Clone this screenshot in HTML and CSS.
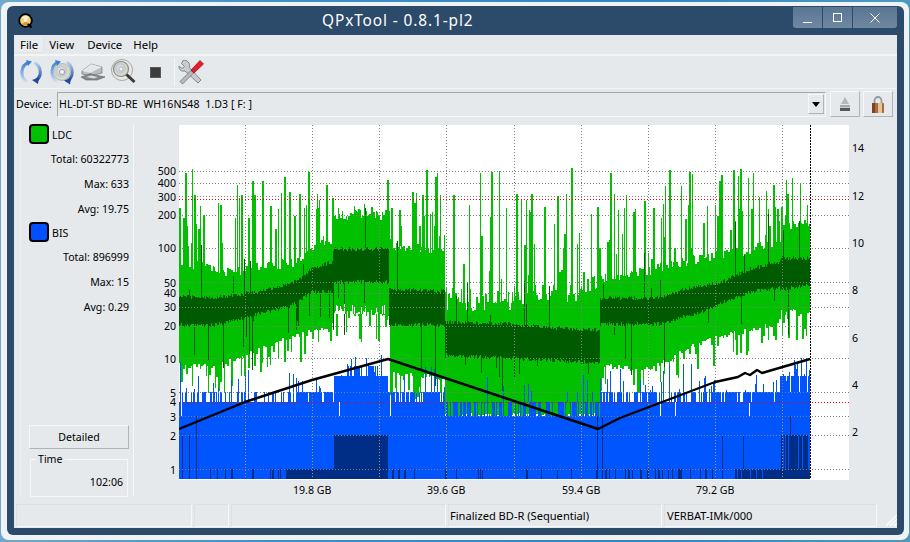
FILE: index.html
```html
<!DOCTYPE html>
<html lang="en">
<head>
<meta charset="utf-8">
<title>QPxTool - 0.8.1-pl2</title>
<link rel="stylesheet" href="styles.css">
</head>
<body>
<div class="window">
  <div class="frame">
    <header class="titlebar">
      <svg class="app-logo" width="16" height="16" viewBox="0 0 16 16">
        <circle cx="7.5" cy="7.5" r="6.3" fill="#f6d27a" stroke="#000" stroke-width="1.8"/>
        <path d="M4 4.5a5 5 0 0 1 7 0L8 7z" fill="#fff4c8"/>
        <path d="M4 11a5 5 0 0 0 7 0L8.5 8z" fill="#e8902a"/>
        <circle cx="7.5" cy="7.5" r="1.5" fill="#fff"/>
        <path d="M10 11l3.5 3.5" stroke="#000" stroke-width="2.4"/>
      </svg>
      <div class="title">QPxTool - 0.8.1-pl2</div>
      <div class="winbtns">
        <div class="winbtn wb-min"><svg width="10" height="10" viewBox="0 0 10 10"><path d="M0 9.5h9" stroke="#fff" stroke-width="1"/></svg></div>
        <div class="winbtn wb-max"><svg width="10" height="10" viewBox="0 0 10 10"><rect x=".5" y=".5" width="8" height="8" fill="none" stroke="#fff"/></svg></div>
        <div class="winbtn wb-close"><svg width="10" height="10" viewBox="0 0 10 10"><path d="M.5.5l9 9M9.5.5l-9 9" stroke="#fff" stroke-width="1"/></svg></div>
      </div>
    </header>
    <div class="client">
      <nav class="menubar">
        <span class="menu menu-active">File</span>
        <span class="menu">View</span>
        <span class="menu">Device</span>
        <span class="menu">Help</span>
      </nav>
      <div class="toolbar">
        <svg class="tool" width="26" height="26" viewBox="0 0 26 26">
          <defs>
            <linearGradient id="arcL" x1="0" y1="0" x2="0" y2="1"><stop offset="0" stop-color="#3f7fd0"/><stop offset="1" stop-color="#cfe0f2"/></linearGradient>
            <linearGradient id="arcR" x1="0" y1="0" x2="0" y2="1"><stop offset="0" stop-color="#b9d2ec"/><stop offset="1" stop-color="#1c4a9c"/></linearGradient>
            <radialGradient id="disc" cx=".45" cy=".45" r=".6"><stop offset="0" stop-color="#f2f2f2"/><stop offset=".5" stop-color="#c4c8d0"/><stop offset=".75" stop-color="#d6e4c8"/><stop offset="1" stop-color="#b4b4c4"/></radialGradient>
          </defs>
          <path d="M11 3.500C3 6 1 17 9 23" fill="none" stroke="url(#arcL)" stroke-width="3.200"/>
          <path d="M8 1l6 1.500-4 4.500z" fill="#3f7fd0"/>
          <path d="M16.500 3.500C24 8 24 17 18 21.500" fill="none" stroke="url(#arcR)" stroke-width="3.200"/>
          <path d="M14 21l7-2.500-1 6.500z" fill="#1c4a9c"/>
        </svg>
        <svg class="tool" width="26" height="26" viewBox="0 0 26 26">
          <circle cx="13" cy="13" r="8.500" fill="url(#disc)" stroke="#9a9aa4" stroke-width=".6"/>
          <circle cx="13" cy="13" r="2.600" fill="#eef0f2" stroke="#8a8a92" stroke-width=".8"/>
          <path d="M9 3C2 6 0 17 8 23" fill="none" stroke="url(#arcL)" stroke-width="2.800"/>
          <path d="M6 1l6 1.500-4 4.500z" fill="#3f7fd0"/>
          <path d="M18 3C25 8 25 17 19 22" fill="none" stroke="url(#arcR)" stroke-width="2.800"/>
          <path d="M15 21.500l7-2.500-1 6.500z" fill="#1c4a9c"/>
        </svg>
        <svg class="tool tool-drive" width="26" height="26" viewBox="0 0 26 26">
          <path d="M2 12l9-7 11 3v6l-12 3-8-2z" fill="#b8bcc0" stroke="#6f7378" stroke-width=".7"/>
          <path d="M2 12l8 2 12-6-11-3z" fill="#e4e6e8"/>
          <path d="M10 14v3" stroke="#6f7378"/>
          <path d="M1 18l9-3 15 3-8 3H6z" fill="#84888c" stroke="#5c6064" stroke-width=".6"/>
          <path d="M6 18l5-1.500 7 1.500-4 1.500z" fill="#d8dadc"/>
        </svg>
        <svg class="tool tool-lens" width="28" height="28" viewBox="0 0 28 28">
          <circle cx="12" cy="12" r="10.500" fill="#e8e8e6" stroke="#a8a8a4" stroke-width="1"/>
          <circle cx="11" cy="11" r="7.500" fill="url(#disc)" stroke="#8c8c8c" stroke-width="1.200"/>
          <circle cx="11" cy="11" r="2" fill="#f4f4f4" stroke="#999" stroke-width=".6"/>
          <path d="M16.500 16.500l8 7.500" stroke="#3a3a3a" stroke-width="3"/>
        </svg>
        <div class="stop"></div>
        <div class="tool-sep"></div>
        <svg class="tool-x" width="26" height="26" viewBox="0 0 26 26">
          <path d="M5 1.500l-1.500 3 3 3-2.500 2-3-2.500C.500 10 3 13 7 12l13 12 3-3L11.500 8.500C12.500 4 9 .500 5 1.500z" fill="#c8ccd0" stroke="#6e7276" stroke-width=".8"/>
          <path d="M2 22.500L13 11.500l2.500 2.500L4.500 25z" fill="#b8bcc0" stroke="#5c6064" stroke-width=".7"/>
          <path d="M13 11l9-9.500 3.500 3.500L16 14z" fill="#e0202a" stroke="#901018" stroke-width=".7"/>
        </svg>
      </div>
      <div class="devbar">
        <span class="devlabel">Device:</span>
        <div class="combo">
          <span class="combo-text">HL-DT-ST BD-RE&nbsp; WH16NS48&nbsp; 1.D3 [ F: ]</span>
          <div class="combo-btn"><svg width="8" height="5" viewBox="0 0 8 5"><path d="M0 0h8L4 5z" fill="#000"/></svg></div>
        </div>
        <div class="iconbtn">
          <svg width="12" height="14" viewBox="0 0 12 14"><path d="M6 0l4 7H2z" fill="#b4b8bc"/><rect x="1" y="8" width="10" height="2.500" fill="#a4a8ac"/><rect x="1" y="11" width="10" height="3" fill="#54585c"/></svg>
        </div>
        <div class="iconbtn">
          <svg width="14" height="17" viewBox="0 0 14 17"><path d="M3.500 8V4.500a3.500 3.500 0 0 1 7 0V8" fill="none" stroke="#94989c" stroke-width="1.800"/><rect x="1" y="7" width="12" height="10" rx="1" fill="#a86c3c"/><rect x="7" y="7" width="4" height="10" fill="#e0c49c"/><rect x="1" y="7" width="3" height="10" fill="#7c4424"/></svg>
        </div>
      </div>
      <main class="main">
        <aside class="side">
          <div class="legend"><span class="swatch swatch-ldc"></span><span class="legend-name">LDC</span></div>
          <div class="stat">Total: 60322773</div>
          <div class="stat">Max: 633</div>
          <div class="stat">Avg: 19.75</div>
          <div class="legend"><span class="swatch swatch-bis"></span><span class="legend-name">BIS</span></div>
          <div class="stat">Total: 896999</div>
          <div class="stat">Max: 15</div>
          <div class="stat">Avg: 0.29</div>
          <div class="detailed">Detailed</div>
          <fieldset class="timebox">
            <legend class="timelegend">Time</legend>
            <div class="timeval">102:06</div>
          </fieldset>
        </aside>
        <section class="plot">
          <canvas id="chart" class="chart" width="670" height="355"></canvas>
          <span class="yl" style="top:51px">500</span>
          <span class="yl" style="top:63px">400</span>
          <span class="yl" style="top:77px">300</span>
          <span class="yl" style="top:95px">200</span>
          <span class="yl" style="top:128px">100</span>
          <span class="yl" style="top:163px">50</span>
          <span class="yl" style="top:173px">40</span>
          <span class="yl" style="top:187px">30</span>
          <span class="yl" style="top:206px">20</span>
          <span class="yl" style="top:239px">10</span>
          <span class="yl" style="top:273px">5</span>
          <span class="yl" style="top:282px">4</span>
          <span class="yl" style="top:297px">3</span>
          <span class="yl" style="top:316px">2</span>
          <span class="yl" style="top:350px">1</span>
          <span class="yr" style="top:28px">14</span>
          <span class="yr" style="top:76px">12</span>
          <span class="yr" style="top:123px">10</span>
          <span class="yr" style="top:170px">8</span>
          <span class="yr" style="top:218px">6</span>
          <span class="yr" style="top:265px">4</span>
          <span class="yr" style="top:312px">2</span>
          <span class="xl" style="left:159px">19.8 GB</span>
          <span class="xl" style="left:293px">39.6 GB</span>
          <span class="xl" style="left:428px">59.4 GB</span>
          <span class="xl" style="left:562px">79.2 GB</span>
        </section>
      </main>
      <footer class="status">
        <div class="cell cell-a"></div>
        <div class="cell cell-b"></div>
        <div class="cell cell-c"></div>
        <div class="cell cell-d">Finalized BD-R (Sequential)</div>
        <div class="cell cell-e">VERBAT-IMk/000</div>
        <svg class="grip" width="12" height="12" viewBox="0 0 12 12"><path d="M12 1L1 12M12 5L5 12M12 9L9 12" stroke="#fff" stroke-width="1.200"/></svg>
      </footer>
    </div>
  </div>
</div>
<script src="chart.js"></script>
</body>
</html>
```
FILE: styles.css
```css
* { box-sizing: border-box; }
html, body { margin: 0; padding: 0; }
body {
  width: 910px;
  height: 542px;
  overflow: hidden;
  background: linear-gradient(90deg, #6fa8cc, #3f8fc8 30%, #2f86c4 70%, #4c9ac0);
  font-family: "Noto Sans", sans-serif;
  font-size: 10.6px;
  color: #000;
}
.window {
  margin: 2px 1px 0 1px;
  height: 538px;
  background: #f0f3f5;
  border-radius: 8px;
  padding: 4px 5px 5px 6px;
}
.frame {
  height: 529px;
  background: #2c4a6a;
  border-radius: 6px;
  padding: 0 7px 7px 7px;
  display: flex;
  flex-direction: column;
}
.titlebar {
  height: 29px;
  flex: none;
  display: flex;
  align-items: flex-start;
  color: #fff;
}
.app-logo { margin: 7px 0 0 4px; flex: none; }
.title {
  margin: 5px 0 0 288px;
  font-size: 15.4px;
  letter-spacing: 0.9px;
  line-height: 20px;
  color: #fff;
  white-space: nowrap;
}
.winbtns { margin-left: auto; display: flex; gap: 1px; margin-top: 1px; }
.winbtn {
  height: 21px;
  background: linear-gradient(#5a7692, #6f88a2);
  display: flex;
  align-items: center;
  justify-content: center;
}
.wb-min { width: 29px; border-bottom-left-radius: 3px; }
.wb-max { width: 29px; }
.wb-close { width: 44px; border-bottom-right-radius: 3px; }
.client {
  flex: 1;
  background: #e6e9ec;
  display: flex;
  flex-direction: column;
  min-height: 0;
}
.menubar {
  height: 21px;
  flex: none;
  display: flex;
  align-items: flex-start;
  border-bottom: 2px solid #f2f4f5;
  padding: 1px 0 0 1px;
  font-size: 11.4px;
}
.menu { height: 17px; line-height: 17px; padding: 0 6px; margin-right: -1px; }
.menu:nth-child(2) { margin-right: 1px; }
.menu-active { background: #eaedf0; padding: 0 5px; border-right: 1px solid #dfe3e6; border-bottom: 1px solid #dfe3e6; }
.toolbar {
  height: 33px;
  flex: none;
  display: flex;
  align-items: center;
  padding-left: 4px;
  border-bottom: 1px solid #f2f4f5;
}
.tool { flex: none; margin-right: 5px; }
.tool-drive { margin-right: 4px; }
.tool-lens { margin-right: 10px; }
.stop {
  width: 11px;
  height: 11px;
  background: #3c3c3c;
  border: 1px solid #5a5a5a;
  margin: 0 13px 0 2px;
}
.tool-sep { width: 1px; height: 28px; background: #f6f7f8; margin-right: 3px; }
.tool-x { flex: none; }
.devbar {
  height: 30px;
  flex: none;
  display: flex;
  align-items: center;
  padding-left: 2px;
}
.devlabel { width: 41px; flex: none; }
.combo {
  width: 769px;
  height: 25px;
  flex: none;
  display: flex;
  align-items: center;
  border-top: 1px solid #a4a8ac;
  border-left: 1px solid #a4a8ac;
  border-right: 1px solid #f6f7f8;
  border-bottom: 1px solid #f6f7f8;
  padding-left: 1px;
  margin-right: 4px;
}
.combo-text { flex: 1; letter-spacing: 0.05px; }
.combo-btn {
  width: 16px;
  height: 20px;
  margin-right: 1px;
  display: flex;
  align-items: center;
  justify-content: center;
  border-top: 1px solid #f6f7f8;
  border-left: 1px solid #f6f7f8;
  border-right: 1px solid #b0b4b8;
  border-bottom: 1px solid #b0b4b8;
}
.iconbtn {
  width: 30px;
  height: 26px;
  flex: none;
  margin-right: 3px;
  display: flex;
  align-items: center;
  justify-content: center;
  border-top: 1px solid #f6f7f8;
  border-left: 1px solid #f6f7f8;
  border-right: 1px solid #b0b4b8;
  border-bottom: 1px solid #b0b4b8;
}
.main {
  height: 385px;
  flex: none;
  display: flex;
}
.side {
  width: 114px;
  height: 373px;
  margin: 5px 0 0 6px;
  flex: none;
  display: flex;
  flex-direction: column;
  border-left: 1px solid #eceff1;
  border-right: 1px solid #f6f7f8;
  padding: 0 4px 0 8px;
}
.legend {
  height: 23px;
  display: flex;
  align-items: flex-start;
  gap: 3px;
}
.legend-name { line-height: 22px; }
.swatch {
  width: 20px;
  height: 20px;
  flex: none;
  border: 2px solid #000;
  border-radius: 4px;
}
.swatch-ldc { background: #00c000; }
.swatch-bis { background: #0050ff; }
.stat { height: 25px; line-height: 25px; text-align: right; flex: none; }
.detailed {
  margin-top: auto;
  height: 24px;
  line-height: 23px;
  width: 100px;
  text-align: center;
  flex: none;
  border-top: 1px solid #f6f7f8;
  border-left: 1px solid #f6f7f8;
  border-right: 1px solid #b0b4b8;
  border-bottom: 1px solid #b0b4b8;
}
.timebox {
  margin: 4px 0 0 1px;
  width: 98px;
  height: 44px;
  flex: none;
  border: 1px solid #f6f7f8;
  padding: 0;
}
.timelegend { padding: 0 2px; margin-left: 5px; line-height: 12px; }
.timeval { text-align: right; padding: 10px 4px 0 0; line-height: 14px; }
.plot { flex: 1; position: relative; padding: 6px 0 0 45px; }
.chart { display: block; width: 670px; height: 355px; background: #fff; }
.yl, .yr, .xl { position: absolute; line-height: 14px; white-space: nowrap; }
.yl { right: 721px; margin-top: -6px; }
.yr { left: 718px; margin-top: -6px; }
.xl { top: 364px; }
.status {
  height: 23px;
  flex: none;
  display: flex;
  align-items: stretch;
  position: relative;
  padding-left: 2px;
  gap: 2px;
}
.cell {
  border-top: 1px solid #dde0e3;
  border-left: 1px solid #dde0e3;
  border-right: 1px solid #f6f7f8;
  border-bottom: 1px solid #f6f7f8;
  line-height: 21px;
  padding-left: 2px;
  overflow: hidden;
  white-space: nowrap;
}
.cell-a { width: 176px; }
.cell-b { width: 35px; }
.cell-c { width: 215px; }
.cell-d { width: 214px; font-size: 11.1px; padding-left: 1px; }
.cell-e { width: 213px; font-size: 11.1px; }
.grip { position: absolute; right: 0; bottom: 1px; }
```
FILE: chart.js
```javascript
(function () {
  var cv = document.getElementById('chart');
  var g = cv.getContext('2d');
  var OX = 179, OY = 125;
  var seed = 20240611;
  function R() {
    seed |= 0; seed = seed + 0x6D2B79F5 | 0;
    var t = Math.imul(seed ^ seed >>> 15, 1 | seed);
    t = t + Math.imul(t ^ t >>> 7, 61 | t) ^ t;
    return ((t ^ t >>> 14) >>> 0) / 4294967296;
  }
  function rr(a, b) { return a + (b - a) * R(); }
  function lerp(tab, x) {
    for (var i = 1; i < tab.length; i++) {
      if (x <= tab[i][0]) {
        var a = tab[i - 1], b = tab[i];
        return a[1] + (b[1] - a[1]) * (x - a[0]) / (b[0] - a[0] || 1);
      }
    }
    return tab[tab.length - 1][1];
  }
  function rect(color, x, y0, w, y1) {
    if (y1 <= y0) return;
    g.fillStyle = color;
    g.fillRect(Math.round(x - OX), Math.round(y0 - OY), w, Math.round(y1) - Math.round(y0));
  }
  var GREEN = '#00c000', DARK = '#005a00', BLUE = '#0055ff', NAVY = '#002d86';
  var gTop = [[179,264],[200,266],[220,273],[260,267],[290,263],[312,250],[332,240],[333,215],[388,215],[389,245],[444,250],[445,296],[500,296],[580,285],[600,278],[650,270],[700,258],[750,250],[779,240],[780,225],[810,225]];
  var gBot = [[179,366],[215,366],[240,358],[270,345],[285,338],[300,335],[332,325],[333,313],[388,313],[389,372],[444,378],[445,416],[600,416],[601,366],[650,370],[680,352],[715,338],[750,330],[779,322],[780,312],[810,312]];
  var dTop = [[179,296],[215,298],[260,291],[290,284],[300,278],[312,268],[332,262],[333,249],[388,249],[389,289],[444,291],[445,322],[510,324],[580,330],[599,330],[600,298],[660,298],[680,290],[720,282],[750,269],[779,262],[780,258],[810,258]];
  var dBot = [[179,325],[215,325],[250,316],[290,306],[312,292],[332,292],[333,282],[388,282],[389,325],[444,325],[445,356],[510,358],[580,362],[599,362],[600,324],[660,324],[700,312],[750,292],[779,288],[780,290],[810,285]];

  g.fillStyle = '#fff';
  g.fillRect(0, 0, 670, 355);
  // green columns
  var x = 179, w;
  while (x < 810) {
    w = R() < 0.4 ? 1 : 2;
    if (x + w > 810) w = 810 - x;
    var sparse = x >= 445 && x < 600;
    var top = lerp(gTop, x) + rr(-5, 5);
    if (sparse) top += rr(-6, 12);
    var bot = lerp(gBot, x) + rr(-3, 3);
    if (!sparse && R() < 0.28) bot += rr(4, 28);
    if (bot > 416) bot = 416;
    rect(GREEN, x, top, w, bot);
    var pSpike = x >= 333 && x < 388 ? 0.08 : (sparse ? 0.38 : 0.5);
    if (R() < pSpike) {
      var st = R() < 0.5 ? rr(168, 215) : rr(205, top);
      if (x >= 780) st = rr(163, 225);
      rect(GREEN, x, st, R() < 0.5 ? 2 : 1, top + 4);
    }
    x += w;
  }
  // dark green band
  for (x = 179; x < 810; x++) {
    var dt = lerp(dTop, x) + rr(-2, 2);
    var db = lerp(dBot, x) + rr(-2, 2);
    rect(DARK, x, dt, 1, db);
    var r = R();
    if (r < 0.04) rect(DARK, x, dt - rr(5, 55), 1, dt + 1);
    else if (r < 0.1) rect(DARK, x, db - 1, 1, db + rr(6, x >= 445 && x < 600 ? 40 : 60));
  }
  // white notches under the raised band (x 333-388)
  for (x = 333; x < 388; x++) {
    if (R() < 0.25) rect('#fff', x, rr(304, 312), 1, 314);
  }
  // blue
  rect(BLUE, 179, 416, 631, 479);
  for (x = 179; x < 810; x++) {
    var m = x < 445 || x >= 600 ? 0.985 : 0.55;
    if (R() < m) rect(BLUE, x, 402, 1, 416);
    var p5, ps, sTop;
    if (x < 296) { p5 = 0.35; ps = 0.08; sTop = 360; }
    else if (x < 334) { p5 = 0.85; ps = 0.06; sTop = 376; }
    else if (x < 388) { p5 = 1; ps = 0.22; sTop = 352; }
    else if (x < 445) { p5 = 0.75; ps = 0.08; sTop = 365; }
    else if (x < 600) { p5 = 0.05; ps = 0.07; sTop = 362; }
    else if (x < 715) { p5 = 0.5; ps = 0.16; sTop = 356; }
    else if (x < 780) { p5 = 0.85; ps = 0.14; sTop = 372; }
    else { p5 = 1; ps = 0.4; sTop = 346; }
    if (R() < p5) rect(BLUE, x, 392, 1, 402);
    if (x >= 334 && x < 388) rect(BLUE, x, x > 345 && x < 378 && R() < 0.6 ? 366 : 376, 1, 402);
    if (x >= 780 && R() < 0.75) rect(BLUE, x, 376, 1, 402);
    if (R() < ps) rect(BLUE, x, rr(sTop, 392), 1, 402);
  }
  // navy bands and thin lines
  rect(NAVY, 334, 435, 54, 479);
  rect(NAVY, 286, 469, 102, 479);
  rect(NAVY, 781, 435, 27, 479);
  rect(NAVY, 735, 469, 75, 479);
  [783, 785, 788, 798, 802].forEach(function (p) { rect(BLUE, p, 436, 1, 469); });
  [737, 741, 750, 756, 762].forEach(function (p) { rect(BLUE, p, 469, 1, 479); });
  [182, 189, 722, 743].forEach(function (p) { rect(NAVY, p, 435, 1, 479); });
  [196, 597, 602].forEach(function (p) { rect(NAVY, p, 416, 1, 479); });
  rect(NAVY, 790, 416, 1, 436);
  var thin = [210,217,225,231,252,270,272,278,280,392,398,404,414,445,456,478,480,482,526,541,557,571,596,605,609,615,625,628,632,640,647,655,658,662,668,672,678,680,690,700,705,712];
  thin.forEach(function (p) { rect(NAVY, p, 469, R() < 0.3 ? 2 : 1, 479); });
  // grid
  var i;
  function hDots(y, color) {
    g.fillStyle = color;
    for (i = 0; i < 670; i += 3) g.fillRect(i, y - OY, 1, 1);
  }
  function vDots(px, color) {
    for (i = 0; i < 354; i += 3) {
      g.fillStyle = i + OY > 402 ? '#b09a58' : color;
      g.fillRect(px - OX, i, 1, 1);
    }
  }
  [171, 183, 196, 215, 248, 282, 293, 307, 326, 358, 392, 416, 435, 469].forEach(function (y) { hDots(y, '#808080'); });
  [245, 312, 379, 446, 514, 581, 648, 715, 782].forEach(function (p) { vDots(p, '#808080'); });
  hDots(199, '#f00000');
  hDots(402, '#f00000');
  g.fillStyle = '#000';
  for (i = 0; i < 354; i += 3) g.fillRect(810 - OX, i, 1, 2);
  // speed line
  var pts = [[179,429],[245,402],[312,380],[388,359],[598,429],[620,418],[715,382],[738,377],[745,373],[750,375],[757,370],[762,373],[810,359]];
  g.strokeStyle = '#000';
  g.lineWidth = 2.4;
  g.lineJoin = 'round';
  g.beginPath();
  pts.forEach(function (p, n) {
    if (n) g.lineTo(p[0] - OX, p[1] - OY); else g.moveTo(p[0] - OX, p[1] - OY);
  });
  g.stroke();
})();
```
